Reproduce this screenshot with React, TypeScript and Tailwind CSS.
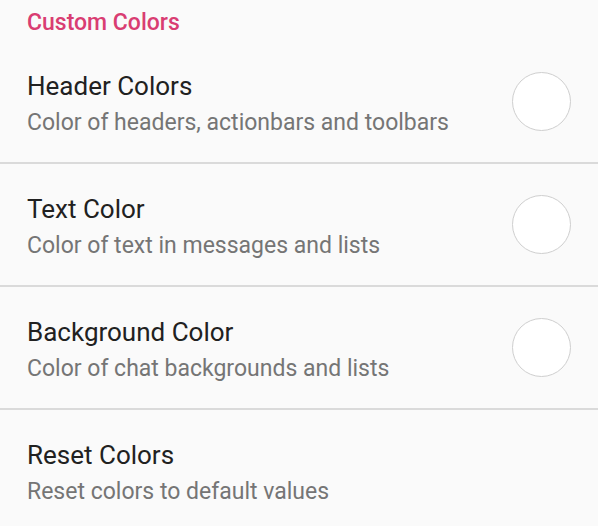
import React from 'react';

type Item = {
    title: string;
    subtitle: string;
    swatch: boolean;
};

const items: Item[] = [
    { title: 'Header Colors', subtitle: 'Color of headers, actionbars and toolbars', swatch: true },
    { title: 'Text Color', subtitle: 'Color of text in messages and lists', swatch: true },
    { title: 'Background Color', subtitle: 'Color of chat backgrounds and lists', swatch: true },
    { title: 'Reset Colors', subtitle: 'Reset colors to default values', swatch: false },
];

export default function App() {
    return (
        <div className="min-h-screen w-full bg-[#fafafa]" style={{ fontFamily: 'Roboto, "Noto Sans", sans-serif' }}>
            {/* Section header */}
            <div className="h-[41px] pl-[27px] pt-[9px]">
                <span className="text-[23px] leading-[28px] font-medium text-[#d93d72]">Custom Colors</span>
            </div>

            {items.map((item, i) => (
                <div key={item.title}>
                    <div className="h-[121px] flex items-center justify-between pl-[27px] pr-[27px]">
                        <div className="flex flex-col pt-[5px]">
                            <span className="text-[26px] leading-[34px] text-[#212121]">{item.title}</span>
                            <span className="mt-[3px] text-[23px] leading-[34px] text-[#757575]">{item.subtitle}</span>
                        </div>
                        {item.swatch && (
                            <div className="w-[59px] h-[59px] rounded-full bg-white border-[1.5px] border-[#cfcfcf]" />
                        )}
                    </div>
                    {i < items.length - 1 && <div className="h-[2px] bg-[#dadada]" />}
                </div>
            ))}
        </div>
    );
}
